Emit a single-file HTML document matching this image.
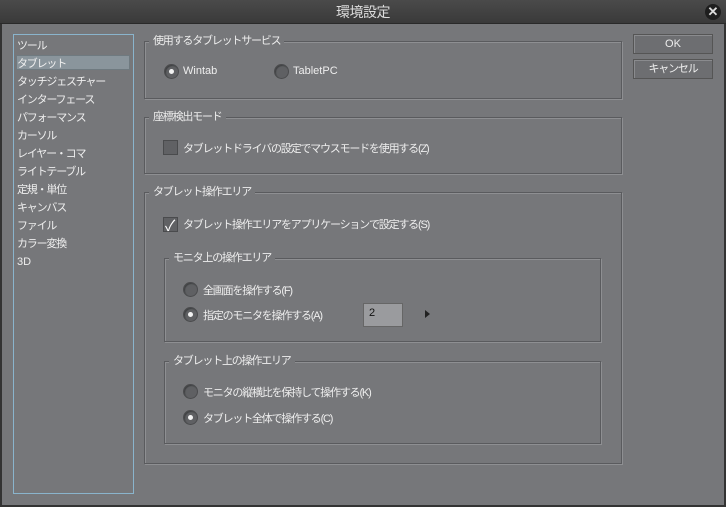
<!DOCTYPE html>
<html><head><meta charset="utf-8"><style>
*{margin:0;padding:0;box-sizing:border-box}
body{width:726px;height:507px;background:#333;position:relative;overflow:hidden;font-family:"Liberation Sans","Noto Sans CJK JP",sans-serif;font-size:11px;letter-spacing:-1.2px;color:#eee}
.win{position:absolute;left:2px;top:0;width:722px;height:505px;background:#76777a}
.title{position:absolute;left:0;top:0;width:726px;height:24px;background:linear-gradient(#4a4a4a,#3a3a3a);border-bottom:1px solid #2a2a2a;text-align:center;line-height:24px;font-size:14px;letter-spacing:-0.5px;color:#ddd}
.close{position:absolute;left:705px;top:4px;width:16px;height:16px;border-radius:50%;background:#1e1e1e;color:#ddd;font-size:13px;line-height:16px;text-align:center;font-weight:bold;letter-spacing:0}
.abs{position:absolute;white-space:nowrap}
.lat{letter-spacing:0}
.list{position:absolute;left:13px;top:34px;width:121px;height:460px;border:1px solid #8ab4cc}
.sel{position:absolute;left:16px;top:55px;width:114px;height:15px;background:#8a959c;border:1px solid #6f7a80}
.g{position:absolute;border:1px solid #5a5b5e;box-shadow:inset 1px 1px 0 #8e8f92,1px 1px 0 #8e8f92}
.gt{position:absolute;background:#76777a;padding:0 4px;line-height:14px;top:-8px;left:4px}
.r{position:absolute;width:15px;height:15px;border-radius:50%;background:#5f6063;border:1px solid #4a4b4d;box-shadow:inset 1px 1px 1px #3f4042}
.r.on::after{content:"";position:absolute;left:4px;top:4px;width:5px;height:5px;border-radius:50%;background:#f2f2f2}
.cb{position:absolute;width:15px;height:15px;background:#606164;border:1px solid #4a4b4d}
.btn{position:absolute;left:633px;width:80px;height:20px;background:#6d6e71;border:1px solid #555;box-shadow:inset 1px 1px 0 #8a8b8e;text-align:center;line-height:18px}
</style></head><body>
<div class="win"></div>
<div class="title">環境設定</div>
<div class="close">✕</div>
<div class="list"></div>
<div class="sel"></div>
<div class="abs" style="left:17px;top:37px;line-height:18px">ツール<br>タブレット<br>タッチジェスチャー<br>インターフェース<br>パフォーマンス<br>カーソル<br>レイヤー・コマ<br>ライトテーブル<br>定規・単位<br>キャンバス<br>ファイル<br>カラー変換<br><span class="lat">3D</span></div>

<div class="g" style="left:144px;top:41px;width:478px;height:58px"><span class="gt abs">使用するタブレットサービス</span></div>
<div class="r on" style="left:164px;top:64px"></div><div class="abs lat" style="left:183px;top:65px">Wintab</div>
<div class="r" style="left:274px;top:64px"></div><div class="abs lat" style="left:293px;top:65px">TabletPC</div>

<div class="g" style="left:144px;top:117px;width:478px;height:57px"><span class="gt abs">座標検出モード</span></div>
<div class="cb" style="left:163px;top:140px"></div><div class="abs" style="left:183px;top:140px">タブレットドライバの設定でマウスモードを使用する(Z)</div>

<div class="g" style="left:144px;top:192px;width:478px;height:272px"><span class="gt abs">タブレット操作エリア</span></div>
<div class="cb" style="left:163px;top:217px"><span class="abs" style="left:1px;top:-3px;font-size:15px;color:#fff;letter-spacing:0">✓</span></div><div class="abs" style="left:183px;top:216px">タブレット操作エリアをアプリケーションで設定する(S)</div>

<div class="g" style="left:164px;top:258px;width:437px;height:84px"><span class="gt abs">モニタ上の操作エリア</span></div>
<div class="r" style="left:183px;top:282px"></div><div class="abs" style="left:203px;top:282px">全画面を操作する(F)</div>
<div class="r on" style="left:183px;top:307px"></div><div class="abs" style="left:203px;top:307px">指定のモニタを操作する(A)</div>
<div class="abs lat" style="left:363px;top:303px;width:40px;height:24px;background:#9a9b9e;border:1px solid #666;padding:3px 0 0 5px;color:#111">2</div>
<div class="abs" style="left:425px;top:310px;width:0;height:0;border-left:5px solid #222;border-top:4px solid transparent;border-bottom:4px solid transparent"></div>

<div class="g" style="left:164px;top:361px;width:437px;height:83px"><span class="gt abs">タブレット上の操作エリア</span></div>
<div class="r" style="left:183px;top:384px"></div><div class="abs" style="left:203px;top:384px">モニタの縦横比を保持して操作する(K)</div>
<div class="r on" style="left:183px;top:410px"></div><div class="abs" style="left:203px;top:410px">タブレット全体で操作する(C)</div>

<div class="btn lat" style="top:34px">OK</div>
<div class="btn" style="top:59px">キャンセル</div>
</body></html>
